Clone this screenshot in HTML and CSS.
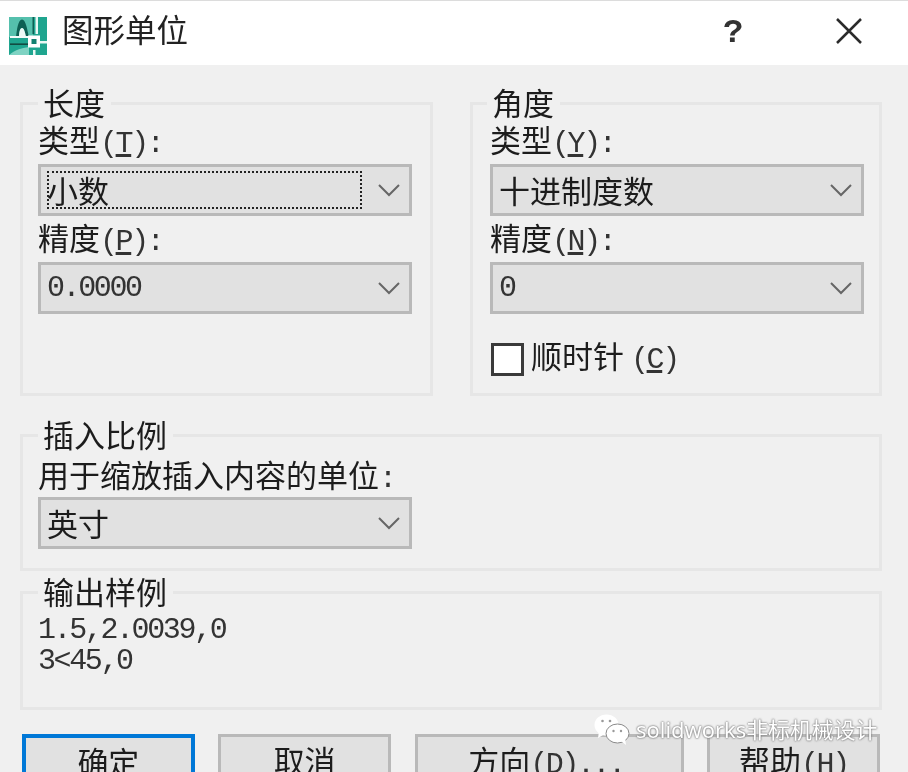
FILE: index.html
```html
<!DOCTYPE html>
<html lang="zh-CN">
<head>
    <meta charset="UTF-8">
    <meta name="viewport" content="width=device-width, initial-scale=1.0">
    <title>图形单位</title>
    <link rel="stylesheet" href="styles.css">
</head>
<body>
    <div class="dialog">
        <header class="titlebar">
            <svg class="app-icon" viewBox="0 0 38 38">
                <rect width="38" height="38" fill="#1fa58f"/>
                <path d="M0 0h24v20H0z" fill="#55c0ad"/>
                <path d="M7 20C8 12 9 3 13 2.500 17 3 18 12 20 20h-3c-1-5-2-9-4-9s-3 4-3 9z" fill="#0e5f53"/>
                <path d="M10 20c0-5 1-9 3-9s3 4 4 9z" fill="#eef9f6"/>
                <path d="M1 19h18v2H1z" fill="#f4fbf9"/>
                <path d="M1 26.500h18v1.300H1z" fill="#10352f"/>
                <path d="M0 38c6-5 12-7 20-8v8z" fill="#7fd3c3"/>
                <path d="M23.500 0h1.500v17h-1.500z" fill="#0e5f53"/>
                <path d="M26.500 0h2.500v17h-2.500zM31 24h7v2.500h-7zM24 33h2.500v5H24z" fill="#eaf7f4"/>
                <rect x="19" y="18.500" width="12" height="12" fill="#fff"/>
                <rect x="22.500" y="22" width="5" height="5" fill="#128070"/>
            </svg>
            <h1 class="title">图形单位</h1>
            <span class="help">?</span>
            <svg class="close" viewBox="0 0 28 28">
                <path d="M2 2l24 24M26 2L2 26" fill="none" stroke="#2b2b2b" stroke-width="2.500"/>
            </svg>
        </header>

        <main class="content">
            <div class="top-groups">
                <section class="group group-top">
                    <h2 class="legend">长度</h2>
                    <label class="field-label">类型<span class="lat">(<u>T</u>):</span></label>
                    <div class="select">
                        <span class="focus-rect">小数</span>
                        <svg class="chevron" viewBox="0 0 24 14"><path d="M2 2l10 10L22 2"/></svg>
                    </div>
                    <label class="field-label">精度<span class="lat">(<u>P</u>):</span></label>
                    <div class="select">
                        <span class="lat">0.0000</span>
                        <svg class="chevron" viewBox="0 0 24 14"><path d="M2 2l10 10L22 2"/></svg>
                    </div>
                </section>

                <section class="group group-top group-right">
                    <h2 class="legend">角度</h2>
                    <label class="field-label">类型<span class="lat">(<u>Y</u>):</span></label>
                    <div class="select">
                        <span>十进制度数</span>
                        <svg class="chevron" viewBox="0 0 24 14"><path d="M2 2l10 10L22 2"/></svg>
                    </div>
                    <label class="field-label">精度<span class="lat">(<u>N</u>):</span></label>
                    <div class="select">
                        <span class="lat">0</span>
                        <svg class="chevron" viewBox="0 0 24 14"><path d="M2 2l10 10L22 2"/></svg>
                    </div>
                    <div class="check-row">
                        <span class="checkbox"></span>
                        <span class="check-text">顺时针<span class="lat check-key">(<u>C</u>)</span></span>
                    </div>
                </section>
            </div>

            <section class="group group-insert">
                <h2 class="legend">插入比例</h2>
                <label class="field-label">用于缩放插入内容的单位<span class="lat">:</span></label>
                <div class="select">
                    <span>英寸</span>
                    <svg class="chevron" viewBox="0 0 24 14"><path d="M2 2l10 10L22 2"/></svg>
                </div>
            </section>

            <section class="group group-output">
                <h2 class="legend">输出样例</h2>
                <p class="sample lat">1.5,2.0039,0</p>
                <p class="sample lat">3&lt;45,0</p>
            </section>

            <div class="buttons">
                <button class="btn btn-default" type="button">确定</button>
                <button class="btn" type="button">取消</button>
                <button class="btn btn-wide" type="button">方向<span class="lat">(<u>D</u>)...</span></button>
                <button class="btn" type="button">帮助<span class="lat">(<u>H</u>)</span></button>
            </div>
        </main>

        <div class="watermark">
            <svg class="wechat" viewBox="0 0 36 32">
                <ellipse cx="12.500" cy="11" rx="12" ry="10.500" fill="#fff"/>
                <path d="M5 17l-1 7 7-4z" fill="#fff"/>
                <ellipse cx="23.500" cy="19.500" rx="11.500" ry="9.500" fill="#fff" stroke="#8a8a8a" stroke-width="1"/>
                <path d="M27 27l5 4-1-7z" fill="#fff"/>
                <circle cx="8.500" cy="7" r="1.300" fill="#999"/>
                <circle cx="16" cy="7" r="1.300" fill="#999"/>
                <circle cx="19.500" cy="17" r="1.200" fill="#999"/>
                <circle cx="27" cy="17" r="1.200" fill="#999"/>
            </svg>
            <span class="watermark-text">solidworks非标机械设计</span>
        </div>
    </div>
</body>
</html>
```

FILE: styles.css
```css
/* General Styles */
html, body {
    margin: 0;
    padding: 0;
    height: 100%;
    overflow: hidden;
    background: #f0f0f0;
}

.dialog {
    position: relative;
    width: 908px;
    height: 772px;
    overflow: hidden;
    background: #f0f0f0;
    color: #1c1c1c;
    font-family: "Noto Sans CJK SC", sans-serif;
    font-size: 31px;
    filter: blur(0.6px);
}

/* half-width latin and digits, about half of a CJK cell */
.lat {
    color: #333;
    font-family: "Liberation Mono", "Noto Sans CJK SC", monospace;
    font-size: 30px;
    letter-spacing: -2.400px;
}

u {
    text-underline-offset: 2px;
}

/* Title Bar */
.titlebar {
    display: flex;
    align-items: center;
    height: 64px;
    padding: 0 45px 0 9px;
    background: #fff;
    border-top: 1px solid #dcdcdc;
}

.app-icon {
    width: 38px;
    height: 38px;
    margin-top: 6px;
    flex-shrink: 0;
}

.title {
    flex: 1;
    margin: 0 0 11px 15px;
    font-size: 31.500px;
    font-weight: 400;
    line-height: 40px;
    color: #222;
}

.help {
    margin: 0 98px 0 0;
    width: 14px;
    font-family: "Liberation Mono", monospace;
    font-size: 34px;
    font-weight: 700;
    line-height: 36px;
    color: #333;
}

.close {
    width: 28px;
    height: 28px;
    margin-bottom: 4px;
}

/* Group Boxes */
.content {
    padding: 37px 26px 0 20px;
}

.top-groups {
    display: grid;
    grid-template-columns: 413px 412px;
    column-gap: 37px;
}

.group {
    box-sizing: border-box;
    border: 3px solid #e6e6e6;
    padding: 0 15px;
}

.group-top {
    height: 294px;
}

.group-right {
    padding-left: 17px;
}

.group-right .legend {
    margin-left: -3px;
}

.group-insert {
    height: 137px;
    margin-top: 38px;
}

.group-output {
    height: 119px;
    margin-top: 20px;
}

.legend {
    width: fit-content;
    height: 33px;
    margin: -20px 0 0;
    padding: 0 6px 0 5px;
    background: #f0f0f0;
    font-size: 31px;
    font-weight: 400;
    line-height: 33px;
}

.field-label {
    display: block;
    height: 46px;
    line-height: 42px;
    white-space: nowrap;
}

.group-insert .field-label {
    height: 47px;
    line-height: 48px;
}

/* Select */
.select {
    box-sizing: border-box;
    display: flex;
    align-items: center;
    justify-content: space-between;
    width: 374px;
    height: 52px;
    padding: 0 8px 0 6px;
    background: #e1e1e1;
    border: 3px solid #b9b9b9;
    line-height: 46px;
}

.focus-rect {
    box-sizing: border-box;
    width: 315px;
    height: 38px;
    border: 2px dotted #222;
    line-height: 34px;
    text-indent: -2px;
    white-space: nowrap;
}

.chevron {
    width: 24px;
    height: 14px;
    fill: none;
    stroke: #666;
    stroke-width: 2;
}

/* Checkbox */
.check-row {
    display: flex;
    align-items: center;
    gap: 7px;
    height: 33px;
    margin: 29px 0 0 1px;
}

.checkbox {
    box-sizing: border-box;
    width: 33px;
    height: 33px;
    background: #fff;
    border: 3px solid #3a3a3a;
}

.check-text {
    line-height: 33px;
    margin-top: -4px;
}

.check-key {
    margin-left: 7px;
}

/* Output Sample */
.sample {
    margin: 0;
    height: 31px;
    line-height: 31px;
}

.sample:first-of-type {
    margin-top: 8px;
}

/* Buttons */
.buttons {
    display: flex;
    gap: 23.500px;
    margin: 24px 0 0 2px;
}

.btn {
    box-sizing: border-box;
    flex-shrink: 0;
    width: 172.750px;
    height: 52px;
    padding: 0 0 16px;
    background: #e1e1e1;
    border: 3px solid #b9b9b9;
    border-radius: 0;
    color: #1c1c1c;
    font-family: "Noto Sans CJK SC", sans-serif;
    font-size: 31px;
    line-height: 46px;
    overflow: visible;
}

.btn-default {
    border-color: #0078d7;
    border-width: 4px;
}

.btn-wide {
    width: 269px;
    padding-right: 6px;
}

/* Watermark */
.watermark {
    position: absolute;
    left: 594px;
    top: 714px;
    display: flex;
    align-items: center;
    gap: 6px;
}

.wechat {
    width: 36px;
    height: 32px;
}

.watermark-text {
    font-family: "Noto Sans", "Noto Sans CJK SC", sans-serif;
    font-size: 21.900px;
    line-height: 32px;
    color: #fff;
    text-shadow: 0 0 2px #777, 0 0 2px #777;
    white-space: nowrap;
}
```
